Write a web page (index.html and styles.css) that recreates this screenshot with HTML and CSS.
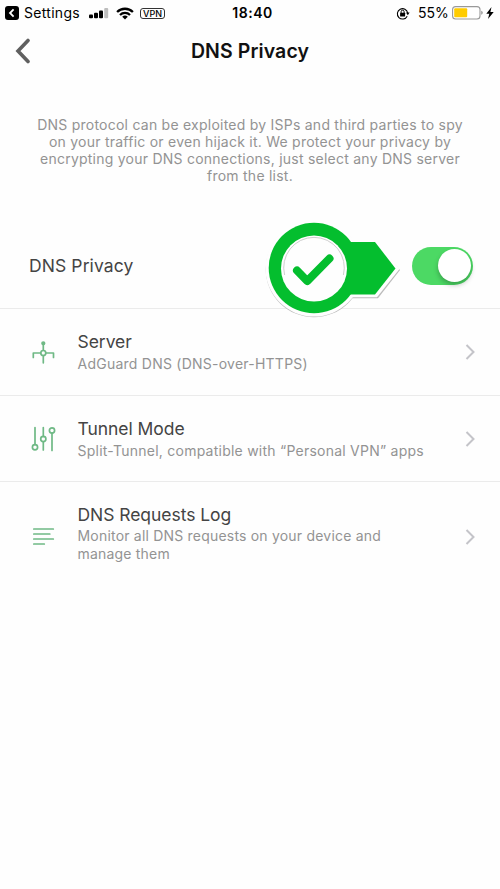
FILE: index.html
```html
<!DOCTYPE html>
<html lang="en">
<head>
<meta charset="utf-8">
<title>DNS Privacy</title>
<link rel="stylesheet" href="styles.css">
</head>
<body>
<div class="status">
  <div class="status-left">
    <svg class="back-app" width="14" height="14" viewBox="0 0 14 14"><rect width="14" height="14" rx="3"/><path d="M8.600 3.400 5 7l3.600 3.600" fill="none" stroke="#fff" stroke-width="1.800"/></svg>
    <span class="app-name">Settings</span>
    <svg class="signal" width="20" height="11" viewBox="0 0 20 11"><rect y="6.500" width="4" height="3.800" rx="1"/><rect x="5" y="4.800" width="4" height="5.500" rx="1"/><rect x="10" y="2.600" width="4" height="7.700" rx="1"/><rect x="15.200" y="0" width="4" height="10.300" rx="1" fill="#bdbdbd"/></svg>
    <svg class="wifi" width="18" height="13" viewBox="0 0 18 13"><g fill="none" stroke="#000" stroke-width="2.300"><path d="M1.100 5a11.200 11.200 0 0 1 15.800 0"/><path d="M4 8a7.100 7.100 0 0 1 10 0"/></g><path d="M6.200 9.800a4 4 0 0 1 5.600 0L9 12.500z"/></svg>
    <span class="vpn">VPN</span>
  </div>
  <span class="time">18:40</span>
  <div class="status-right">
    <svg class="lock" width="14" height="13" viewBox="0 0 14 13"><path d="M11.200 9.200A5.200 5.200 0 1 1 11.700 6" fill="none" stroke="#000" stroke-width="1.100"/><path d="M10 5.600h3.600l-1.800 2.600z"/><rect x="4.100" y="5.800" width="5" height="3.700" rx=".5"/><path d="M5.100 6V4.700a1.500 1.500 0 0 1 3 0V6" fill="none" stroke="#000"/></svg>
    <span class="percent">55%</span>
    <svg class="battery" width="32" height="14" viewBox="0 0 32 14"><rect x=".6" y=".6" width="27.400" height="12.400" rx="3" fill="#fff" stroke="#999" stroke-width="1.100"/><rect x="2.200" y="2.300" width="13" height="9" rx="1" fill="#fc0"/><path d="M29.200 4.800q1.600.5 1.600 2t-1.600 2z" fill="#999"/></svg>
    <svg class="bolt" width="8" height="12" viewBox="0 0 8 12"><path d="M5.500 0 .3 6.700h3L2 12l5.700-7H4.400z"/></svg>
  </div>
</div>
<header class="nav">
  <svg class="nav-back" width="16" height="26" viewBox="0 0 16 26"><path d="M13 2.500 3 13 13 23.500" fill="none" stroke="#606060" stroke-width="3.600" stroke-linecap="round" stroke-linejoin="miter"/></svg>
  <h1>DNS Privacy</h1>
</header>
<p class="intro">DNS protocol can be exploited by ISPs and third parties to spy<br>on your traffic or even hijack it. We protect your privacy by<br>encrypting your DNS connections, just select any DNS server<br>from the list.</p>
<section class="toggle-row">
  <span class="toggle-label">DNS Privacy</span>
  <span class="switch"><span class="knob"></span></span>
  <svg class="callout" width="144" height="104" viewBox="0 0 144 104">
    <g fill="#bbb"><circle cx="50" cy="53" r="48.300"/><path d="M82 26h30L136 54 114 82.300H82z"/></g>
    <g fill="#fefefe"><circle cx="50" cy="52" r="48.600"/><path d="M80 23h32.500L135.500 53 113 81.300H80z"/></g>
    <circle cx="50" cy="52" r="45.300" fill="#04be2e"/><path d="M80 26h31L131.500 52.500 111 78.500H80z" fill="#04be2e"/>
    <circle cx="50" cy="52.500" r="33" fill="#fefefe"/><path d="M20.600 59A30.300 30.300 0 1 1 79.400 59" fill="none" stroke="#c8c8c8" stroke-width=".9"/>
    <path d="m33 54.500 10.200 10.600L65.500 42.500" fill="none" stroke="#04be2e" stroke-width="8" stroke-linecap="round" stroke-linejoin="round"/>
  </svg>
</section>
<section class="row">
  <svg class="icon" width="26" height="26" viewBox="0 0 26 26"><path d="M13.300 4.500v6.500M13.300 16.500v7.300M3.300 18.500v-4.500h7.200M16 14h7.500v4.500"/><circle cx="13.300" cy="14" r="2.500"/><circle cx="13.300" cy="4.300" r="1.300" fill="#6fb985"/></svg>
  <div class="copy"><h2>Server</h2><p>AdGuard DNS (DNS-over-HTTPS)</p></div>
  <svg class="chevron" width="11" height="16" viewBox="0 0 11 16"><path d="m1.500 1 7 7-7 7"/></svg>
</section>
<section class="row row-mode">
  <svg class="icon" width="26" height="26" viewBox="0 0 26 26"><path d="M5 1.500v17M13.300 1.500v9M13.300 16v8M22 7v17.500"/><circle cx="5" cy="21.300" r="2.600"/><circle cx="13.300" cy="13" r="2.600"/><circle cx="22" cy="4.500" r="2.600"/></svg>
  <div class="copy"><h2>Tunnel Mode</h2><p>Split-Tunnel, compatible with “Personal VPN” apps</p></div>
  <svg class="chevron" width="11" height="16" viewBox="0 0 11 16"><path d="m1.500 1 7 7-7 7"/></svg>
</section>
<section class="row row-log">
  <svg class="icon" width="26" height="26" viewBox="0 0 26 26"><path d="M3.800 5h19.500M3.800 10h16M3.800 15h19.500M3.800 20h10.500"/></svg>
  <div class="copy"><h2>DNS Requests Log</h2><p>Monitor all DNS requests on your device and<br>manage them</p></div>
  <svg class="chevron" width="11" height="16" viewBox="0 0 11 16"><path d="m1.500 1 7 7-7 7"/></svg>
</section>
</body>
</html>
```
FILE: styles.css
```css
* { box-sizing: border-box; }
body { margin: 0; min-height: 889px; background: #fefefe; font-family: Inter, "Liberation Sans", sans-serif; overflow: hidden; }
h1, h2, p { margin: 0; }
svg { display: block; flex: none; }
.status { height: 26px; display: grid; grid-template-columns: 1fr auto 1fr; align-items: center; font-size: 14px; line-height: 26px; color: #000; }
.status-left { display: flex; align-items: center; padding-left: 5px; }
.app-name { margin-left: 5px; width: 59px; letter-spacing: .3px; white-space: nowrap; }
.signal { margin-left: 6px; }
.wifi { margin-left: 7px; }
.vpn { margin-left: 6px; width: 25px; height: 11px; border: 1px solid #333; border-radius: 3px; font-size: 9px; line-height: 9px; text-align: center; font-weight: 500; }
.time { font-weight: 600; letter-spacing: .5px; padding-left: 5px; }
.status-right { display: flex; align-items: center; justify-content: flex-end; padding-right: 6px; }
.percent { margin-left: 8px; width: 31px; white-space: nowrap; }
.battery { margin-left: 3px; }
.bolt { margin-left: 2px; }
.nav { height: 50px; display: grid; grid-template-columns: 50px 1fr 50px; align-items: center; }
.nav-back { margin-left: 15px; }
.nav h1 { font-size: 19.500px; font-weight: 600; line-height: 24px; letter-spacing: .1px; text-align: center; color: #111; }
.intro { margin-top: 40px; font-size: 14px; line-height: 17px; letter-spacing: .24px; text-align: center; color: #939393; white-space: nowrap; }
.toggle-row { position: relative; height: 125px; padding: 39px 27px 0 29px; display: flex; justify-content: space-between; align-items: center; border-bottom: 1px solid #ebebeb; }
.toggle-label { font-size: 17.500px; color: #444; letter-spacing: .1px; }
.switch { width: 61px; height: 38px; border-radius: 19px; background: #4cd964; display: flex; justify-content: flex-end; align-items: center; padding-right: 2px; }
.knob { width: 33px; height: 33px; border-radius: 50%; background: #fff; box-shadow: 0 3px 5px rgba(0,0,0,.25); }
.callout { position: absolute; left: 264px; top: 32px; }
.row { height: 87px; display: grid; grid-template-columns: 48px 1fr 11px; align-items: center; padding: 0 24px 0 29.500px; border-bottom: 1px solid #ebebeb; }
.row-mode { height: 86px; }
.row-log { height: 109px; border-bottom: 0; }
.icon { fill: none; stroke: #6fb985; stroke-width: 1.700; stroke-linecap: round; stroke-linejoin: round; }
.copy h2 { font-size: 17.500px; line-height: 22px; font-weight: 400; color: #444; letter-spacing: -.05px; }
.copy p { font-size: 14px; line-height: 17.200px; letter-spacing: .24px; color: #939393; margin-top: 2px; white-space: nowrap; }
.row-log .copy { padding-bottom: 7px; }
.row-log .copy p { margin-top: 1px; letter-spacing: .2px; }
.chevron { fill: none; stroke: #c4c4c9; stroke-width: 2; }
```
